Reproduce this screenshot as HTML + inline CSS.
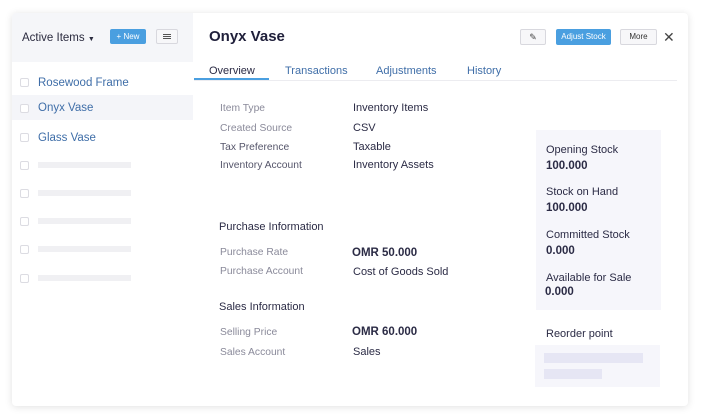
<!DOCTYPE html>
<html><head><meta charset="utf-8"><style>
*{margin:0;padding:0;box-sizing:border-box}
body{width:701px;height:419px;background:#fff;font-family:"Liberation Sans",sans-serif;position:relative;overflow:hidden}
.card{position:absolute;left:12px;top:13px;width:676px;height:393px;background:#fff;border-radius:4px;box-shadow:0 1px 8px rgba(0,0,0,.12)}
.a{position:absolute;white-space:nowrap;line-height:1}
.t{margin-top:2px}
.lbl{font-size:10.3px;color:#8a8a9a;margin-top:2px}
.val{font-size:11px;color:#2b2b45;margin-top:2px}
.b{font-weight:bold}
.sk{position:absolute;background:#f0f0f3;height:6px}
.cb{position:absolute;width:9px;height:9px;border:1px solid #dcdce2;border-radius:2px;background:#fff}
</style></head><body>
<div class="card"></div>
<div style="position:absolute;left:12px;top:13px;width:181px;height:49px;background:#f5f6f9;border-radius:4px 0 0 0"></div>
<div style="position:absolute;left:12px;top:95px;width:181px;height:25px;background:#f4f5f9"></div>
<div class="a t" style="left:22px;top:31px;font-size:11.5px;color:#2b2b3f">Active Items <span style="font-size:7px">▼</span></div>
<div class="a" style="left:110px;top:29px;width:36px;height:15px;background:#4a9fe0;border-radius:2px;color:#fff;font-size:8px;text-align:center;line-height:15px">+ New</div>
<div class="a" style="left:156px;top:29px;width:22px;height:15px;border:1px solid #d8d8de;border-radius:2px;background:#f7f7f9"><div style="position:absolute;left:6px;top:4px;width:8px;height:5px;border-top:1.5px solid #555;border-bottom:1.5px solid #555"></div><div style="position:absolute;left:6px;top:6px;width:8px;border-top:1px solid #555"></div></div>
<div class="cb" style="left:20px;top:78px"></div><div class="a t" style="left:38px;top:76px;font-size:11.5px;color:#3f6ea8">Rosewood Frame</div>
<div class="cb" style="left:20px;top:104px"></div><div class="a t" style="left:38px;top:101px;font-size:11.5px;color:#3f6ea8">Onyx Vase</div>
<div class="cb" style="left:20px;top:133px"></div><div class="a t" style="left:38px;top:131px;font-size:11.5px;color:#3f6ea8">Glass Vase</div>
<div class="cb" style="left:20px;top:161px"></div><div class="sk" style="left:38px;top:162px;width:93px"></div>
<div class="cb" style="left:20px;top:189px"></div><div class="sk" style="left:38px;top:190px;width:93px"></div>
<div class="cb" style="left:20px;top:217px"></div><div class="sk" style="left:38px;top:218px;width:93px"></div>
<div class="cb" style="left:20px;top:245px"></div><div class="sk" style="left:38px;top:246px;width:93px"></div>
<div class="cb" style="left:20px;top:274px"></div><div class="sk" style="left:38px;top:275px;width:93px"></div>

<div class="a b" style="left:209px;top:29px;font-size:15px;color:#1f1f3a">Onyx Vase</div>
<div class="a" style="left:520px;top:29px;width:26px;height:16px;border:1px solid #d8d8de;border-radius:2px;background:#f7f7f9;text-align:center;font-size:9px;line-height:14px;color:#444">✎</div>
<div class="a" style="left:556px;top:29px;width:55px;height:16px;background:#4a9fe0;border-radius:2px;color:#fff;font-size:8px;text-align:center;line-height:16px">Adjust Stock</div>
<div class="a" style="left:620px;top:29px;width:37px;height:16px;border:1px solid #d8d8de;border-radius:2px;background:#f7f7f9;color:#333;font-size:8px;text-align:center;line-height:14px">More</div>
<div class="a" style="left:663px;top:30px;font-size:14px;color:#444">✕</div>
<div class="a t" style="left:209px;top:64px;font-size:11px;color:#2b2b45">Overview</div>
<div class="a t" style="left:285px;top:64px;font-size:11px;color:#3f6ea8">Transactions</div>
<div class="a t" style="left:376px;top:64px;font-size:11px;color:#3f6ea8">Adjustments</div>
<div class="a t" style="left:467px;top:64px;font-size:11px;color:#3f6ea8">History</div>
<div style="position:absolute;left:194px;top:80px;width:483px;height:1px;background:#ececf0"></div>
<div style="position:absolute;left:194px;top:78px;width:75px;height:2px;background:#4a9fe0"></div>

<div class="a lbl" style="left:220px;top:102px">Item Type</div><div class="a val" style="left:353px;top:101px">Inventory Items</div>
<div class="a lbl" style="left:220px;top:122px">Created Source</div><div class="a val" style="left:353px;top:121px">CSV</div>
<div class="a lbl" style="left:220px;top:141px;color:#55556a">Tax Preference</div><div class="a val" style="left:353px;top:140px">Taxable</div>
<div class="a lbl" style="left:220px;top:159px;color:#55556a">Inventory Account</div><div class="a val" style="left:353px;top:158px">Inventory Assets</div>
<div class="a val" style="left:219px;top:220px">Purchase Information</div>
<div class="a lbl" style="left:220px;top:246px">Purchase Rate</div><div class="a val b" style="left:352px;top:246px;font-size:11.5px">OMR 50.000</div>
<div class="a lbl" style="left:220px;top:265px">Purchase Account</div><div class="a val" style="left:353px;top:265px">Cost of Goods Sold</div>
<div class="a val" style="left:219px;top:300px">Sales Information</div>
<div class="a lbl" style="left:220px;top:326px">Selling Price</div><div class="a val b" style="left:352px;top:325px;font-size:11.5px">OMR 60.000</div>
<div class="a lbl" style="left:220px;top:346px">Sales Account</div><div class="a val" style="left:353px;top:345px">Sales</div>

<div style="position:absolute;left:536px;top:130px;width:125px;height:180px;background:#f6f6fb"></div>
<div class="a val" style="left:546px;top:143px">Opening Stock</div><div class="a val b" style="left:546px;top:159px;font-size:11.5px">100.000</div>
<div class="a val" style="left:546px;top:185px">Stock on Hand</div><div class="a val b" style="left:546px;top:201px;font-size:11.5px">100.000</div>
<div class="a val" style="left:546px;top:228px">Committed Stock</div><div class="a val b" style="left:546px;top:244px;font-size:11.5px">0.000</div>
<div class="a val" style="left:546px;top:271px">Available for Sale</div><div class="a val b" style="left:545px;top:285px;font-size:11.5px">0.000</div>
<div class="a val" style="left:546px;top:327px">Reorder point</div>
<div style="position:absolute;left:535px;top:345px;width:125px;height:42px;background:#f6f6fb"></div>
<div style="position:absolute;left:544px;top:353px;width:99px;height:10px;background:#e6e6f4"></div>
<div style="position:absolute;left:544px;top:369px;width:58px;height:10px;background:#e6e6f4"></div>
</body></html>
